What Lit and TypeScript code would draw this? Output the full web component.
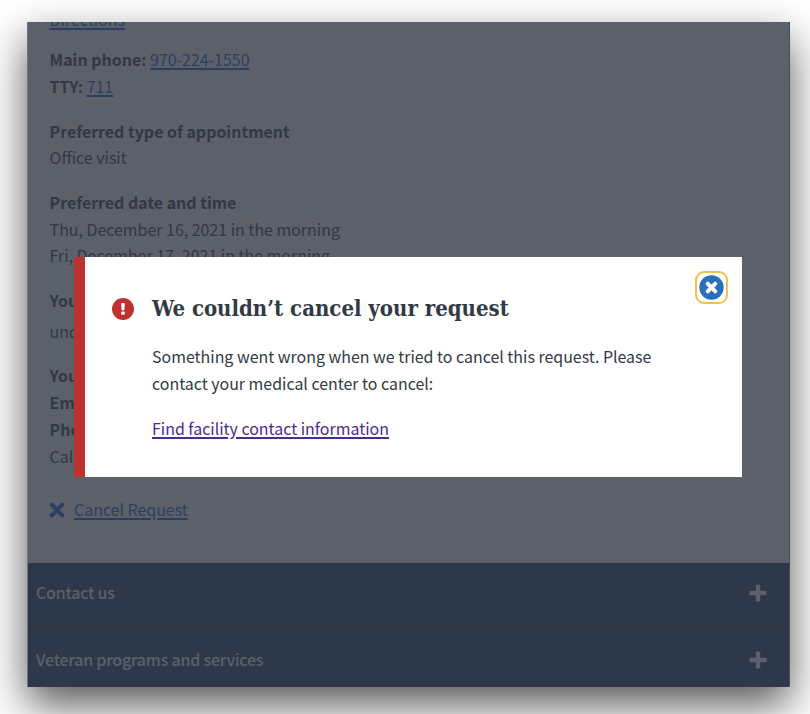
import { LitElement, html, css, svg } from "lit";
import { customElement } from "lit/decorators.js";

const plus = html`<svg class="plus" viewBox="0 0 18 18" width="18" height="18"><rect x="0.500" y="6.800" width="17" height="4.400" rx="1" fill="currentColor"/><rect x="6.800" y="0.500" width="4.400" height="17" rx="1" fill="currentColor"/></svg>`;
const cross = svg`<path d="M2.800 2.800l10.400 10.400M13.200 2.800L2.800 13.200" stroke="currentColor" stroke-width="4.2" stroke-linecap="round" fill="none"/>`;

@customElement("app-root")
export class AppRoot extends LitElement {
  static styles = css`
    :host {
      display: block;
      position: relative;
      box-sizing: border-box;
      height: 714px;
      padding: 22px 20px 27px 27px;
      overflow: hidden;
      background: #fff;
      font: 15.94px/26.8px "Noto Sans CJK SC", "Noto Sans", sans-serif;
    }
    .window {
      box-sizing: border-box;
      height: 665px;
      width: 763px;
      display: flex;
      flex-direction: column;
      background: #5c6069;
      color: #323844;
      box-shadow: 0 18px 40px rgba(0, 0, 0, 0.66);
      border-left: 1px solid #70747b;
      border-right: 1px solid #4a4d52;
    }
    .details {
      height: 541px;
      flex: none;
      overflow: hidden;
      padding-left: 21.6px;
    }
    .line { height: 26.8px; white-space: nowrap; }
    .directions { margin-top: -15px; margin-bottom: 13.6px; }
    .group { margin-bottom: 17.6px; }
    .spaced { margin-top: 4.2px; }
    a { text-decoration: underline; text-underline-offset: 2px; text-decoration-thickness: 1.5px; }
    .window a { color: #2c3f60; }
    b { font-weight: 700; }
    .cancel { display: flex; align-items: center; color: #2c3f60; margin-top: 26.4px; }
    .cancel svg { margin: -1px 9px 0 -0.6px; }
    .bar {
      box-sizing: border-box;
      flex: none;
      display: flex;
      align-items: center;
      justify-content: space-between;
      height: 61px;
      padding: 0 22px 0 8px;
      background: #2d394b;
      color: #5c6069;
      font-weight: 500;
      letter-spacing: -0.19px;
    }
    .divider { flex: none; height: 6px; background: #303644; }
    .last { height: 57px; padding-top: 4px; }
    .plus { display: block; margin-top: -1px; }
    .modal {
      position: absolute;
      left: 74px;
      top: 257px;
      width: 668px;
      height: 220px;
      box-sizing: border-box;
      border-left: 11px solid #bd322f;
      background: #fff;
      color: #323a45;
      display: flex;
      padding: 38px 14px 0 27px;
    }
    .alert { flex: none; margin: 3px 18px 0 0; }
    .body { flex: 1; white-space: nowrap; }
    h1 {
      margin: 0 0 22.4px;
      font: bold 22px/27px "DejaVu Serif", serif;
      font-stretch: condensed;
      letter-spacing: -0.01px;
    }
    p { margin: 0 0 17.8px; }
    .body a { color: #4c2c92; }
    .close {
      flex: none;
      margin-top: -24px;
      box-sizing: border-box;
      width: 33px;
      height: 33px;
      padding: 2px;
      border: 2px solid #f3bf4f;
      border-radius: 9px;
      background: #fff;
    }
    .close svg { display: block; }
  `;

  render() {
    return html`
      <div class="window">
        <div class="details">
          <div class="line directions"><a>Directions</a></div>
          <div class="group">
            <div class="line"><b>Main phone:</b> <a>970-224-1550</a></div>
            <div class="line"><b>TTY:</b> <a>711</a></div>
          </div>
          <div class="group">
            <div class="line"><b>Preferred type of appointment</b></div>
            <div class="line">Office visit</div>
          </div>
          <div class="group">
            <div class="line"><b>Preferred date and time</b></div>
            <div class="line">Thu, December 16, 2021 in the morning</div>
            <div class="line">Fri, December 17, 2021 in the morning</div>
          </div>
          <div class="group">
            <div class="line"><b>You</b></div>
            <div class="line spaced">und</div>
          </div>
          <div class="group">
            <div class="line"><b>You</b></div>
            <div class="line"><b>Ema</b></div>
            <div class="line"><b>Pho</b></div>
            <div class="line">Call</div>
          </div>
          <div class="line cancel">
            <svg width="16" height="16" viewBox="0 0 16 16">${cross}</svg>
            <a>Cancel Request</a>
          </div>
        </div>
        <div class="bar"><span>Contact us</span>${plus}</div>
        <div class="divider"></div>
        <div class="bar last"><span>Veteran programs and services</span>${plus}</div>
      </div>
      <div class="modal" role="dialog">
        <svg class="alert" width="22" height="22" viewBox="0 0 22 22">
          <circle cx="11" cy="11" r="11" fill="#bd322f" />
          <path d="M9.200 5h3.600l-.4 7.200h-2.800z" fill="#fff" />
          <rect x="9.200" y="13.400" width="3.600" height="3.400" rx="1" fill="#fff" />
        </svg>
        <div class="body">
          <h1>We couldn’t cancel your request</h1>
          <p>Something went wrong when we tried to cancel this request. Please<br />contact your medical center to cancel:</p>
          <a>Find facility contact information</a>
        </div>
        <div class="close">
          <svg width="25" height="25" viewBox="0 0 25 25">
            <circle cx="12.500" cy="12.500" r="12.200" fill="#2970b8" />
            <path d="M8.700 8.700l7.600 7.600M16.300 8.700l-7.600 7.600" stroke="#fff" stroke-width="4" stroke-linecap="round" />
          </svg>
        </div>
      </div>
    `;
  }
}
